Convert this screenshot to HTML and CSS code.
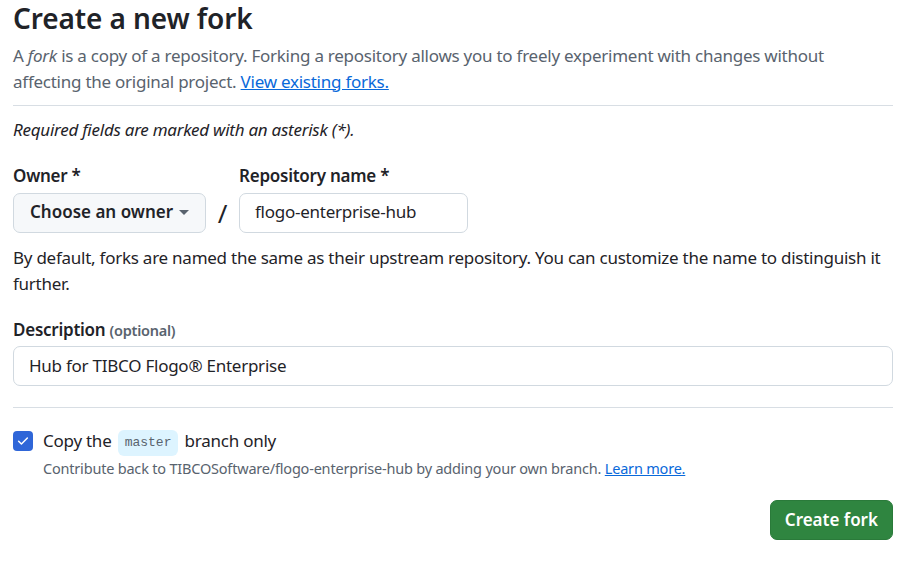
FILE: index.html
```html
<!DOCTYPE html>
<html lang="en">
<head>
<meta charset="utf-8">
<title>Create a new fork</title>
<link rel="stylesheet" href="styles.css">
</head>
<body>
<main class="page">
  <h1 class="title">Create a new fork</h1>
  <p class="lead">A <em>fork</em> is a copy of a repository. Forking a repository allows you to freely experiment with changes without affecting the original project. <a href="#" class="link">View existing forks.</a></p>
  <hr class="rule">
  <p class="required">Required fields are marked with an asterisk (*).</p>

  <div class="name-row">
    <div class="field">
      <label class="label">Owner *</label>
      <button class="owner-btn" type="button">Choose an owner <span class="caret"></span></button>
    </div>
    <span class="slash">/</span>
    <div class="field">
      <label class="label">Repository name *</label>
      <div class="input repo-input">flogo-enterprise-hub</div>
    </div>
  </div>
  <p class="hint">By default, forks are named the same as their upstream repository. You can customize the name to distinguish it further.</p>

  <div class="field desc-field">
    <label class="label">Description <span class="optional">(optional)</span></label>
    <div class="input desc-input">Hub for TIBCO Flogo® Enterprise</div>
  </div>

  <hr class="rule rule-2">

  <div class="check-row">
    <span class="checkbox"><svg viewBox="0 0 16 16" width="14" height="14"><path d="M3 8.2l3.2 3.2L13 4.6" fill="none" stroke="#fff" stroke-width="1.7" stroke-linecap="round" stroke-linejoin="round"/></svg></span>
    <div class="check-text">
      <div class="check-label">Copy the <code class="branch">master</code> branch only</div>
      <div class="note">Contribute back to TIBCOSoftware/flogo-enterprise-hub by adding your own branch. <a href="#" class="link">Learn more.</a></div>
    </div>
  </div>

  <div class="actions">
    <button class="primary" type="button">Create fork</button>
  </div>
</main>
</body>
</html>
```

FILE: styles.css
```css
* { box-sizing: border-box; }
html, body { margin: 0; padding: 0; background: #fff; }
body {
  font-family: "Noto Sans", "Open Sans", sans-serif;
  font-size: 17px;
  letter-spacing: -0.25px;
  line-height: 26.25px;
  color: #1f2328;
}
.page {
  width: 880px;
  margin-left: 13px;
}
.title {
  margin: 0;
  font-size: 28px;
  letter-spacing: -0.1px;
  line-height: 37.5px;
  font-weight: 600;
  color: #1f2328;
}
.lead {
  margin: 5px 0 0;
  color: #59636e;
}
.link { color: #0969da; text-decoration: underline; }
.rule {
  border: 0;
  border-top: 1px solid #d8dee4;
  margin: 10px 0 0;
  height: 0;
}
.required {
  margin: 11px 0 0;
  font-style: italic;
}
.name-row {
  display: flex;
  align-items: flex-end;
  margin-top: 20px;
}
.field { display: flex; flex-direction: column; }
.label {
  font-weight: 600;
  margin-bottom: 3px;
}
.owner-btn {
  width: 193px;
  height: 40px;
  display: flex;
  align-items: center;
  justify-content: space-between;
  padding: 0 16px 0 16px;
  background: #f6f8fa;
  border: 1px solid #d1d9e0;
  border-radius: 7px;
  font: inherit;
  font-weight: 600;
  color: #1f2328;
}
.caret {
  width: 0; height: 0;
  border-left: 5px solid transparent;
  border-right: 5px solid transparent;
  border-top: 5px solid #59636e;
}
.slash {
  width: 33px;
  height: 40px;
  text-align: center;
  font-size: 26px;
  line-height: 40px;
}
.input {
  height: 40px;
  border: 1px solid #d1d9e0;
  border-radius: 7px;
  padding: 0 15px;
  display: flex;
  align-items: center;
  color: #1f2328;
}
.repo-input { width: 229px; }
.hint { margin: 12px 0 0; }
.desc-field { margin-top: 20px; }
.optional {
  font-size: 14.5px;
  color: #59636e;
}
.desc-input { width: 880px; }
.rule-2 { margin-top: 21px; }
.check-row {
  display: flex;
  align-items: flex-start;
  margin-top: 20px;
}
.checkbox {
  width: 20px;
  height: 20px;
  margin-top: 3px;
  border-radius: 4px;
  background: #2f66d8;
  display: flex;
  align-items: center;
  justify-content: center;
  flex: none;
}
.check-text { margin-left: 10px; }
.check-label { line-height: 26px; }
.branch {
  display: inline-block;
  font-family: "Liberation Mono", "DejaVu Sans Mono", monospace;
  font-size: 13px;
  letter-spacing: 0;
  line-height: 18px;
  color: #59636e;
  background: #ddf4ff;
  border-radius: 6px;
  padding: 4px 7px;
  margin: 0 2px;
  vertical-align: middle;
}
.note {
  margin-top: 1px;
  font-size: 14.5px;
  letter-spacing: -0.2px;
  line-height: 22px;
  color: #59636e;
}
.actions {
  display: flex;
  justify-content: flex-end;
  margin-top: 21px;
}
.primary {
  height: 40px;
  padding: 0 14px;
  background: #2f8540;
  color: #fff;
  border: 1px solid #2a7a3a;
  border-radius: 7px;
  font: inherit;
  font-weight: 600;
}
```
